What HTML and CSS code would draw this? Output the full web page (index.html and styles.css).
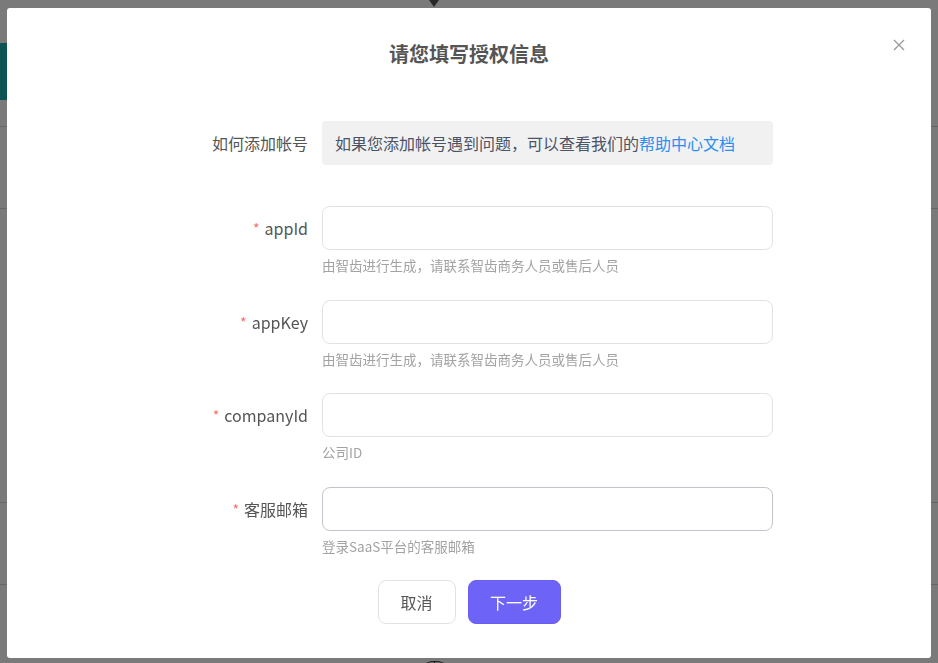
FILE: index.html
```html
<!DOCTYPE html>
<html lang="zh-CN">
<head>
  <meta charset="UTF-8" />
  <meta name="viewport" content="width=device-width, initial-scale=1.0"/>
  <title>授权信息</title>
  <link rel="stylesheet" href="styles.css">
</head>
<body>
  <div class="page">
    <div class="arrow-down"></div>
    <div class="lane lane-first">
      <div class="node"></div>
    </div>
    <div class="lane lane-second"></div>
    <div class="lane lane-tall"></div>
    <div class="lane lane-last"></div>
    <div class="lane lane-end">
      <div class="joint"></div>
    </div>
  </div>

  <div class="mask">
    <div class="dialog">
      <button class="close" aria-label="关闭">
        <svg width="12" height="12" viewBox="0 0 12 12">
          <path d="M1 1L11 11M11 1L1 11" stroke="#999" stroke-width="1.3" fill="none"/>
        </svg>
      </button>
      <h2 class="title">请您填写授权信息</h2>

      <div class="form">
        <div class="row row-help">
          <label class="label">如何添加帐号</label>
          <div class="help-box">如果您添加帐号遇到问题，可以查看我们的<a href="#">帮助中心文档</a></div>
        </div>

        <div class="row">
          <label class="label"><span class="req">*</span>appId</label>
          <div class="field">
            <input type="text" class="input" />
            <div class="hint">由智齿进行生成，请联系智齿商务人员或售后人员</div>
          </div>
        </div>

        <div class="row">
          <label class="label"><span class="req">*</span>appKey</label>
          <div class="field">
            <input type="text" class="input" />
            <div class="hint">由智齿进行生成，请联系智齿商务人员或售后人员</div>
          </div>
        </div>

        <div class="row">
          <label class="label"><span class="req">*</span>companyId</label>
          <div class="field">
            <input type="text" class="input" />
            <div class="hint">公司ID</div>
          </div>
        </div>

        <div class="row">
          <label class="label"><span class="req">*</span>客服邮箱</label>
          <div class="field">
            <input type="text" class="input input-hover" />
            <div class="hint">登录SaaS平台的客服邮箱</div>
          </div>
        </div>
      </div>

      <div class="actions">
        <button class="btn btn-cancel">取消</button>
        <button class="btn btn-next">下一步</button>
      </div>
    </div>
  </div>
</body>
</html>
```

FILE: styles.css
```css
* { box-sizing: border-box; }
body {
  margin: 0;
  width: 938px;
  height: 663px;
  overflow: hidden;
  font-family: "Noto Sans CJK SC", "Noto Sans", sans-serif;
  background: #fff;
}

/* page behind the mask */
.page { height: 663px; }
.arrow-down {
  width: 0;
  height: 0;
  margin-left: 429px;
  border-left: 5px solid transparent;
  border-right: 5px solid transparent;
  border-top: 7px solid #555;
  margin-bottom: -7px;
}
.lane { border-bottom: 1px solid #d6d6d6; }
.lane-first { height: 127px; padding-top: 43px; }
.lane-second { height: 82px; }
.lane-tall { height: 294px; }
.lane-last { height: 82px; }
.lane-end { border-bottom: none; padding-top: 76px; }
.node {
  width: 60px;
  height: 57px;
  background: #1aafaf;
}
.joint {
  width: 22px;
  height: 10px;
  margin-left: 424px;
  border-top: 1px solid #333;
  border-radius: 50% 50% 0 0;
  position: relative;
}
.joint::after {
  content: "";
  position: absolute;
  left: 10px;
  top: 0;
  width: 1px;
  height: 10px;
  background: #333;
}

/* mask + dialog */
.mask {
  position: fixed;
  inset: 0;
  background: rgba(0, 0, 0, 0.52);
  padding: 8px 7px 5px 7px;
}
.dialog {
  position: relative;
  height: 100%;
  background: #fff;
  border-radius: 3px;
  padding-top: 32px;
}
.close {
  position: absolute;
  top: 30px;
  right: 25px;
  width: 14px;
  height: 14px;
  padding: 1px;
  border: none;
  background: none;
  cursor: pointer;
  line-height: 0;
}
.title {
  margin: 0 0 53px;
  text-align: center;
  font-size: 20px;
  line-height: 28px;
  font-weight: 700;
  color: #555;
}

.form { width: 766px; }
.row {
  display: grid;
  grid-template-columns: 301px 451px;
  column-gap: 14px;
  margin-bottom: 24.5px;
}
.row-help { margin-bottom: 41px; align-items: center; }
.label {
  height: 44px;
  display: flex;
  align-items: center;
  justify-content: flex-end;
  font-size: 16px;
  color: #555;
}
.req {
  color: #f56c6c;
  font-size: 14px;
  margin-right: 5px;
}
.help-box {
  height: 44px;
  display: flex;
  align-items: center;
  padding-left: 13px;
  background: #f1f1f2;
  border-radius: 4px;
  font-size: 16px;
  color: #4b5466;
}
.help-box a { color: #2b8ef0; text-decoration: none; }

.input {
  display: block;
  width: 100%;
  height: 44px;
  border: 1px solid #e2e2e4;
  border-radius: 8px;
  outline: none;
  padding: 0 12px;
  font: inherit;
}
.input-hover { border-color: #c2c4cc; }
.hint {
  margin-top: 5px;
  font-size: 13.5px;
  line-height: 20px;
  color: #a3a3a3;
}

.actions {
  display: flex;
  justify-content: center;
  gap: 12px;
  margin-top: 1px;
}
.btn {
  height: 44px;
  border-radius: 8px;
  font: inherit;
  font-size: 16px;
  cursor: pointer;
}
.btn-cancel {
  width: 78px;
  background: #fff;
  border: 1px solid #e2e2e4;
  color: #555;
}
.btn-next {
  width: 93px;
  background: #6e63f7;
  border: 1px solid #6a5ff0;
  color: #fff;
}
```
